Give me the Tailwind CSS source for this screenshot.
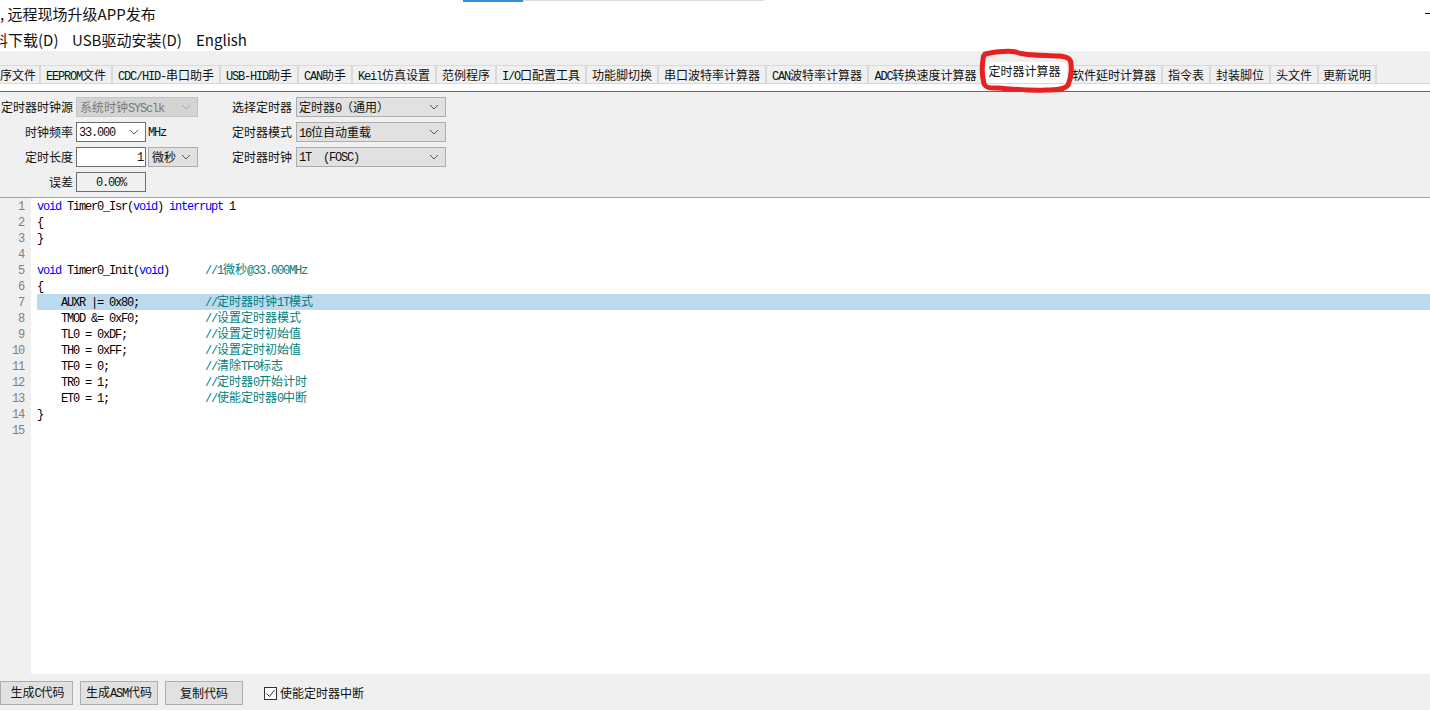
<!DOCTYPE html>
<html lang="zh">
<head>
<meta charset="utf-8">
<script src="https://cdn.jsdelivr.net/npm/@tailwindcss/browser@4"></script>
</head>
<body class="bg-white">
<div class="relative flex flex-col w-[1430px] h-[710px] overflow-hidden bg-white text-[#111] text-[12px] font-['Noto_Sans_CJK_SC',sans-serif]">
  <!-- window top -->
  <div class="h-[51px] shrink-0 flex flex-col">
    <div class="flex h-[2px] ml-[463px]"><div class="w-[60px] bg-[#2f8fe0]"></div><div class="w-[241px] h-[1px] bg-[#dcdcdc]"></div></div>
    <div class="flex justify-between items-center h-[24px] text-[15px] leading-[24px]">
      <span class="whitespace-pre">, 远程现场升级APP发布</span>
      <span class="w-[5px] h-[1px] bg-black -mt-[2px]"></span>
    </div>
    <div class="flex items-center h-[25px] pt-[2px] text-[15px] leading-[23px] whitespace-pre">
      <span class="w-[72px] -ml-[7px] shrink-0">料下载(D)</span>
      <span class="ml-[7px] w-[124px] shrink-0">USB驱动安装(D)</span>
      <span>English</span>
    </div>
  </div>
  <!-- tabs -->
  <div class="h-[33px] shrink-0 bg-[#f0f0f0] flex items-end border-b border-[#d9d9d9]">
    <div class="flex items-end h-[21px] whitespace-pre">
      <div class="w-[41px] h-[18px] leading-[18px] border-r-2 border-[#d9d9d9] border-t border-t-[#d9d9d9]">序文件</div>
      <div class="w-[72px] h-[18px] leading-[18px] text-center border-r-2 border-[#d9d9d9] border-t border-t-[#d9d9d9]"><span class="font-['Liberation_Mono'] tracking-[-1.2px]">EEPROM</span>文件</div>
      <div class="w-[108px] h-[18px] leading-[18px] text-center border-r-2 border-[#d9d9d9] border-t border-t-[#d9d9d9]"><span class="font-['Liberation_Mono'] tracking-[-1.2px]">CDC/HID-</span>串口助手</div>
      <div class="w-[78px] h-[18px] leading-[18px] text-center border-r-2 border-[#d9d9d9] border-t border-t-[#d9d9d9]"><span class="font-['Liberation_Mono'] tracking-[-1.2px]">USB-HID</span>助手</div>
      <div class="w-[54px] h-[18px] leading-[18px] text-center border-r-2 border-[#d9d9d9] border-t border-t-[#d9d9d9]"><span class="font-['Liberation_Mono'] tracking-[-1.2px]">CAN</span>助手</div>
      <div class="w-[84px] h-[18px] leading-[18px] text-center border-r-2 border-[#d9d9d9] border-t border-t-[#d9d9d9]"><span class="font-['Liberation_Mono'] tracking-[-1.2px]">Keil</span>仿真设置</div>
      <div class="w-[60px] h-[18px] leading-[18px] text-center border-r-2 border-[#d9d9d9] border-t border-t-[#d9d9d9]">范例程序</div>
      <div class="w-[90px] h-[18px] leading-[18px] text-center border-r-2 border-[#d9d9d9] border-t border-t-[#d9d9d9]"><span class="font-['Liberation_Mono'] tracking-[-1.2px]">I/O</span>口配置工具</div>
      <div class="w-[72px] h-[18px] leading-[18px] text-center border-r-2 border-[#d9d9d9] border-t border-t-[#d9d9d9]">功能脚切换</div>
      <div class="w-[108px] h-[18px] leading-[18px] text-center border-r-2 border-[#d9d9d9] border-t border-t-[#d9d9d9]">串口波特率计算器</div>
      <div class="w-[102px] h-[18px] leading-[18px] text-center border-r-2 border-[#d9d9d9] border-t border-t-[#d9d9d9]"><span class="font-['Liberation_Mono'] tracking-[-1.2px]">CAN</span>波特率计算器</div>
      <div class="w-[113px] h-[18px] leading-[18px] text-center border-[#d9d9d9] border-t"><span class="font-['Liberation_Mono'] tracking-[-1.2px]">ADC</span>转换速度计算器</div>
      <div class="w-[85px] h-[21px] leading-[18px] text-center bg-white">定时器计算器</div>
      <div class="w-[96px] h-[18px] leading-[18px] text-center border-r-2 border-[#d9d9d9] border-t border-t-[#d9d9d9]">软件延时计算器</div>
      <div class="w-[48px] h-[18px] leading-[18px] text-center border-r-2 border-[#d9d9d9] border-t border-t-[#d9d9d9]">指令表</div>
      <div class="w-[60px] h-[18px] leading-[18px] text-center border-r-2 border-[#d9d9d9] border-t border-t-[#d9d9d9]">封装脚位</div>
      <div class="w-[48px] h-[18px] leading-[18px] text-center border-r-2 border-[#d9d9d9] border-t border-t-[#d9d9d9]">头文件</div>
      <div class="w-[58px] h-[18px] leading-[18px] text-center border-r-2 border-[#d9d9d9] border-t border-t-[#d9d9d9]">更新说明</div>
    </div>
  </div>
  <div class="h-[7px] shrink-0 bg-white"></div>
  <!-- settings panel -->
  <div class="h-[106px] shrink-0 bg-[#f0f0f0] border-t border-[#696969] flex items-start pt-[5px] whitespace-pre">
    <div class="flex flex-col gap-[5px] w-[232px] shrink-0">
      <div class="flex items-center h-[20px]">
        <span class="w-[73px] text-right">定时器时钟源</span>
        <div class="ml-[3px] w-[122px] h-[20px] bg-[#d4d4d4] border border-[#c4c4c4] flex items-center justify-between pl-[3px] pr-[6px] text-[#7a7a7a]"><span class="pt-[1px]">系统时钟<span class="font-['Liberation_Mono'] tracking-[-1.2px]">SYSclk</span></span>
          <svg width="10" height="6" viewBox="0 0 10 6" fill="none" stroke="#adadad"><path d="M1 1l4 4 4-4"/></svg></div>
      </div>
      <div class="flex items-center h-[20px]">
        <span class="w-[73px] text-right">时钟频率</span>
        <div class="ml-[3px] w-[70px] h-[20px] bg-white border border-[#6e6e6e] flex items-center justify-between pl-[2px] pr-[6px]"><span class="pt-[1px] font-['Liberation_Mono'] tracking-[-1.2px]">33.000</span>
          <svg width="10" height="6" viewBox="0 0 10 6" fill="none" stroke="#555"><path d="M1 1l4 4 4-4"/></svg></div>
        <span class="ml-[2px] pt-[1px] font-['Liberation_Mono'] tracking-[-1.2px]">MHz</span>
      </div>
      <div class="flex items-center h-[20px]">
        <span class="w-[73px] text-right">定时长度</span>
        <div class="ml-[3px] w-[70px] h-[20px] bg-white border border-[#6e6e6e] flex items-center justify-end pr-[2px] pt-[1px] font-['Liberation_Mono'] tracking-[-1.2px]">1</div>
        <div class="ml-[2px] w-[50px] h-[20px] bg-[#e1e1e1] border border-[#adadad] flex items-center justify-between pl-[3px] pr-[6px]"><span>微秒</span>
          <svg width="10" height="6" viewBox="0 0 10 6" fill="none" stroke="#555"><path d="M1 1l4 4 4-4"/></svg></div>
      </div>
      <div class="flex items-center h-[20px]">
        <span class="w-[73px] text-right">误差</span>
        <div class="ml-[3px] w-[70px] h-[20px] bg-[#f0f0f0] border border-[#6e6e6e] flex items-center justify-center pt-[1px] font-['Liberation_Mono'] tracking-[-1.2px]">0.00%</div>
      </div>
    </div>
    <div class="flex flex-col gap-[5px]">
      <div class="flex items-center h-[20px]">
        <span class="w-[60px] text-right">选择定时器</span>
        <div class="ml-[4px] w-[150px] h-[20px] bg-[#e1e1e1] border border-[#adadad] flex items-center justify-between pl-[2px] pr-[6px]"><span class="pt-[1px]">定时器<span class="font-['Liberation_Mono'] tracking-[-1.2px]">0</span>（通用）</span>
          <svg width="10" height="6" viewBox="0 0 10 6" fill="none" stroke="#555"><path d="M1 1l4 4 4-4"/></svg></div>
      </div>
      <div class="flex items-center h-[20px]">
        <span class="w-[60px] text-right">定时器模式</span>
        <div class="ml-[4px] w-[150px] h-[20px] bg-[#e1e1e1] border border-[#adadad] flex items-center justify-between pl-[2px] pr-[6px]"><span class="pt-[1px]"><span class="font-['Liberation_Mono'] tracking-[-1.2px]">16</span>位自动重载</span>
          <svg width="10" height="6" viewBox="0 0 10 6" fill="none" stroke="#555"><path d="M1 1l4 4 4-4"/></svg></div>
      </div>
      <div class="flex items-center h-[20px]">
        <span class="w-[60px] text-right">定时器时钟</span>
        <div class="ml-[4px] w-[150px] h-[20px] bg-[#e1e1e1] border border-[#adadad] flex items-center justify-between pl-[2px] pr-[6px]"><span class="pt-[1px] font-['Liberation_Mono'] tracking-[-1.2px]">1T  (FOSC)</span>
          <svg width="10" height="6" viewBox="0 0 10 6" fill="none" stroke="#555"><path d="M1 1l4 4 4-4"/></svg></div>
      </div>
    </div>
  </div>
  <!-- editor -->
  <div class="flex-1 min-h-0 flex border-t border-[#a0a0a0] font-['Liberation_Mono'] tracking-[-1.2px]">
    <div class="w-[31px] shrink-0 bg-[#f0f0f0] text-[#808080] text-right pr-[7px] leading-[18px]">
      <div class="h-4">1</div><div class="h-4">2</div><div class="h-4">3</div><div class="h-4">4</div><div class="h-4">5</div><div class="h-4">6</div><div class="h-4">7</div><div class="h-4">8</div><div class="h-4">9</div><div class="h-4">10</div><div class="h-4">11</div><div class="h-4">12</div><div class="h-4">13</div><div class="h-4">14</div><div class="h-4">15</div>
    </div>
    <div class="flex-1 ml-[6px] leading-[18px] text-black">
      <div class="h-4 whitespace-pre"><span class="text-[#0000ff]">void</span> Timer0_Isr(<span class="text-[#0000ff]">void</span>) <span class="text-[#0000ff]">interrupt</span> 1</div>
      <div class="h-4 whitespace-pre">{</div>
      <div class="h-4 whitespace-pre">}</div>
      <div class="h-4"></div>
      <div class="h-4 whitespace-pre"><span class="text-[#0000ff]">void</span> Timer0_Init(<span class="text-[#0000ff]">void</span>)      <span class="text-[#008080]">//1<span class="leading-[0] tracking-normal font-['Noto_Sans_CJK_SC']">微秒</span>@33.000MHz</span></div>
      <div class="h-4 whitespace-pre">{</div>
      <div class="h-4 whitespace-pre bg-[#bbdaee]">    AUXR |= 0x80;           <span class="text-[#008080]">//<span class="leading-[0] tracking-normal font-['Noto_Sans_CJK_SC']">定时器时钟</span>1T<span class="leading-[0] tracking-normal font-['Noto_Sans_CJK_SC']">模式</span></span></div>
      <div class="h-4 whitespace-pre">    TMOD &amp;= 0xF0;           <span class="text-[#008080]">//<span class="leading-[0] tracking-normal font-['Noto_Sans_CJK_SC']">设置定时器模式</span></span></div>
      <div class="h-4 whitespace-pre">    TL0 = 0xDF;             <span class="text-[#008080]">//<span class="leading-[0] tracking-normal font-['Noto_Sans_CJK_SC']">设置定时初始值</span></span></div>
      <div class="h-4 whitespace-pre">    TH0 = 0xFF;             <span class="text-[#008080]">//<span class="leading-[0] tracking-normal font-['Noto_Sans_CJK_SC']">设置定时初始值</span></span></div>
      <div class="h-4 whitespace-pre">    TF0 = 0;                <span class="text-[#008080]">//<span class="leading-[0] tracking-normal font-['Noto_Sans_CJK_SC']">清除</span>TF0<span class="leading-[0] tracking-normal font-['Noto_Sans_CJK_SC']">标志</span></span></div>
      <div class="h-4 whitespace-pre">    TR0 = 1;                <span class="text-[#008080]">//<span class="leading-[0] tracking-normal font-['Noto_Sans_CJK_SC']">定时器</span>0<span class="leading-[0] tracking-normal font-['Noto_Sans_CJK_SC']">开始计时</span></span></div>
      <div class="h-4 whitespace-pre">    ET0 = 1;                <span class="text-[#008080]">//<span class="leading-[0] tracking-normal font-['Noto_Sans_CJK_SC']">使能定时器</span>0<span class="leading-[0] tracking-normal font-['Noto_Sans_CJK_SC']">中断</span></span></div>
      <div class="h-4 whitespace-pre">}</div>
    </div>
  </div>
  <!-- bottom bar -->
  <div class="h-[36px] shrink-0 bg-[#f0f0f0] flex items-center whitespace-pre pt-[2px]">
    <div class="w-[73px] h-[24px] bg-[#e1e1e1] border border-[#adadad] flex items-center justify-center pl-[2px]"><span>生成<span class="font-['Liberation_Mono'] tracking-[-1.2px]">C</span>代码</span></div>
    <div class="ml-[7px] w-[78px] h-[24px] bg-[#e1e1e1] border border-[#adadad] flex items-center justify-center"><span>生成<span class="font-['Liberation_Mono'] tracking-[-1.2px]">ASM</span>代码</span></div>
    <div class="ml-[7px] w-[78px] h-[24px] bg-[#e1e1e1] border border-[#adadad] flex items-center justify-center">复制代码</div>
    <div class="ml-[21px] w-[13px] h-[13px] bg-white border border-[#333] flex items-center justify-center">
      <svg width="11" height="11" viewBox="0 0 11 11" fill="none" stroke="#333" stroke-width="1"><path d="M1.5 5.5l3 3 5-6.5"/></svg>
    </div>
    <span class="ml-[3px]">使能定时器中断</span>
  </div>
  <!-- hand-drawn red annotation over the active tab -->
  <svg class="absolute left-[975px] top-[45px] pointer-events-none" width="105" height="52" viewBox="975 45 105 52" fill="none" stroke="#e8201f" stroke-width="5" stroke-linejoin="round" stroke-linecap="round">
    <path d="M985 54C996 52 1006 50 1016 52C1026 56 1044 55 1060 56C1068 57 1071 59 1071 64C1072 72 1071 78 1068 85C1065 89 1058 90 1046 90C1030 91 1012 89 998 88C992 88 987 89 984 84C982 76 982 66 983 60C983 57 984 55 985 54Z"/>
  </svg>
</div>
</body>
</html>
